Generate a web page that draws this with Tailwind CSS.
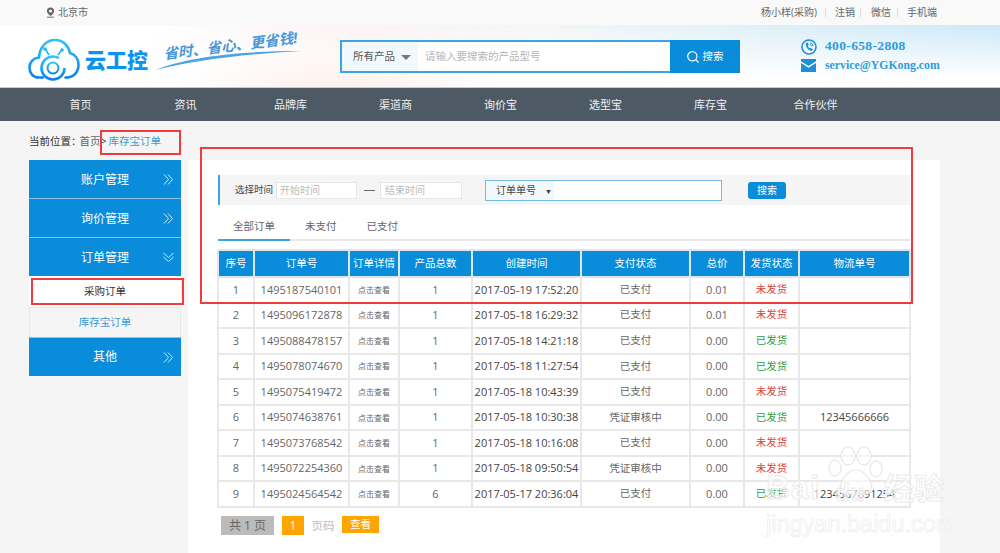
<!DOCTYPE html>
<html lang="zh">
<head>
<meta charset="utf-8">
<script src="https://cdn.jsdelivr.net/npm/@tailwindcss/browser@4"></script>
</head>
<body class="relative w-[1000px] h-[553px] overflow-hidden bg-[#f5f5f5] font-['Open_Sans','Noto_Sans_CJK_SC',sans-serif] text-[10.5px] text-[#555]">

<!-- top bar -->
<div class="h-[25px] bg-[#f9f9f9] flex items-center justify-between pl-[46px] pr-[63px] text-[10px] text-[#666]">
  <div class="flex items-center gap-[3px]">
    <svg width="9" height="11" viewBox="0 0 9 11"><path d="M4.5 0.5a3.6 3.6 0 0 1 3.6 3.6c0 2-2 3.6-3.6 5-1.6-1.4-3.6-3-3.600-5a3.600 3.600 0 0 1 3.600-3.600z" fill="#666"/><circle cx="4.5" cy="4" r="1.6" fill="#f9f9f9"/><rect x="1" y="9.6" width="7" height="1.2" fill="#888"/></svg>
    <span>北京市</span>
  </div>
  <div class="flex items-center">
    <span>杨小样(采购)</span><span class="w-px h-[9px] bg-[#ddd] ml-[8px] mr-[9px]"></span>
    <span>注销</span><span class="w-px h-[9px] bg-[#ddd] ml-[5px] mr-[10px]"></span>
    <span>微信</span><span class="w-px h-[9px] bg-[#ddd] ml-[6px] mr-[9px]"></span>
    <span>手机端</span>
  </div>
</div>

<!-- header -->
<div class="h-[62px] flex items-start bg-[radial-gradient(ellipse_170px_50px_at_340px_70px,#fdeee9,transparent),linear-gradient(180deg,transparent_0%,#ffffff_85%),linear-gradient(90deg,#ffffff_0%,#ffffff_15%,#fbf3f1_35%,#f4f6f7_55%,#e3f1f9_72%,#cde9f8_100%)]">
  <svg class="ml-[28px] mt-[13px] shrink-0" width="52" height="44" viewBox="0 0 52 44">
    <defs><linearGradient id="lg" x1="0" y1="0" x2="0" y2="1"><stop offset="0" stop-color="#2cc4f8"/><stop offset="1" stop-color="#0a82ec"/></linearGradient></defs>
    <path d="M15 39.500H11C5 39.500 1.500 35 1.500 29.500 1.500 24 5.500 20 11 19.500 11.500 9.500 18 2 27 2c8 0 13.500 5.500 15 13 5.500 1.500 8.500 6.500 8.500 12 0 7-5 12.500-12 12.500h-1" fill="none" stroke="url(#lg)" stroke-width="2.600" stroke-linecap="round"/>
    <circle cx="25" cy="30" r="11.500" fill="none" stroke="url(#lg)" stroke-width="2.600" stroke-dasharray="60 12"/>
    <circle cx="25" cy="30" r="5.500" fill="none" stroke="url(#lg)" stroke-width="2"/>
    <path d="M25 23.500v6" stroke="url(#lg)" stroke-width="2"/>
    <circle cx="17" cy="11" r="1.800" fill="#22b4f4"/><circle cx="34" cy="12" r="1.800" fill="#22b4f4"/>
    <path d="M18 12l3 5M33 13l-3 4" stroke="#22b4f4" stroke-width="1.500"/>
  </svg>
  <div class="w-[70px] ml-[5px] mt-[23px] text-[21px] leading-[24px] font-black text-[#0c93ee] shrink-0">云工控</div>
  <div class="relative w-[185px] h-[62px] shrink-0">
    <div class="absolute left-[8px] top-[10px] -rotate-[7deg] italic font-bold text-[14.500px] text-[#4a97d8] whitespace-nowrap">省时、省心、更省钱!</div>
    <svg class="absolute left-[0px] top-[24px]" width="150" height="22" viewBox="0 0 150 22"><path d="M0 21C30 9 80 2 146 2 90 5 40 11 0 21z" fill="#4aa5e2"/></svg>
  </div>
  <div class="mt-[15px] flex h-[33px] w-[400px] shrink-0">
    <div class="flex-1 flex border-2 border-[#3aa5e2] border-r-0 bg-white">
      <div class="w-[76px] bg-[#f2f9fe] flex items-center pl-[11px] pt-[1px] text-[10.500px] text-[#555]">所有产品<span class="ml-[6px] w-0 h-0 border-x-[5px] border-x-transparent border-t-[5px] border-t-[#777]"></span></div>
      <div class="flex items-center pl-[7px] pt-[1px] text-[10.500px] text-[#b5b5b5]">请输入要搜索的产品型号</div>
    </div>
    <div class="w-[70px] bg-[#098cd9] flex items-center justify-center gap-[4px] pt-[1px] text-white text-[10.500px]">
      <svg width="12" height="12" viewBox="0 0 12 12" fill="none" stroke="#fff" stroke-width="1.200"><circle cx="5.300" cy="5.300" r="4.600"/><path d="M8.700 8.700L11.500 11.500"/></svg>
      <span>搜索</span>
    </div>
  </div>
  <div class="ml-[61px] mt-[13px] flex flex-col gap-[2px] font-['Liberation_Serif',serif] font-bold text-[#2d9ce0]">
    <div class="flex items-center h-[17px] gap-[8px] text-[13.500px]">
      <svg width="16" height="16" viewBox="0 0 16 16" fill="none"><circle cx="8" cy="8" r="7" stroke="#1c8fd8" stroke-width="1.600"/><path d="M5 4.200l1.800-.7 1 2.500-1 .8c.3 1 1 2 2 2.600l1-.7 2 1.800-1 1.400c-2.400.3-6.600-3.500-5.800-7.700z" fill="#1c8fd8"/><path d="M9 3.800a3.500 3.500 0 0 1 3 3.400M9 5.500a1.800 1.800 0 0 1 1.500 1.700" stroke="#1c8fd8" stroke-width=".9"/></svg>
      <span class="tracking-[0.35px]">400-658-2808</span>
    </div>
    <div class="flex items-center h-[17px] gap-[8px] text-[11.800px]">
      <svg width="16" height="13" viewBox="0 0 16 13"><path d="M0 0h15v2.200L7.500 7 0 2.200z" fill="#1c8fd8"/><path d="M0 4l7.500 4.800L15 4v9H0z" fill="#1c8fd8"/></svg>
      <span>service@YGKong.com</span>
    </div>
  </div>
</div>

<!-- nav -->
<nav class="h-[34px] border-t border-[#c9c9c9] bg-[#4d5a65] flex pl-[28px] text-[11px] text-[#f0f0f0]">
  <a class="w-[105px] leading-[33px] text-center">首页</a>
  <a class="w-[105px] leading-[33px] text-center">资讯</a>
  <a class="w-[105px] leading-[33px] text-center">品牌库</a>
  <a class="w-[105px] leading-[33px] text-center">渠道商</a>
  <a class="w-[105px] leading-[33px] text-center">询价宝</a>
  <a class="w-[105px] leading-[33px] text-center">选型宝</a>
  <a class="w-[105px] leading-[33px] text-center">库存宝</a>
  <a class="w-[105px] leading-[33px] text-center">合作伙伴</a>
</nav>

<!-- breadcrumb -->
<div class="h-[39px] pl-[29px] pt-[12px] text-[10.500px] leading-[16px] text-[#333]">当前位置<span class="-mr-[2px]">：</span><span class="text-[#666]">首页</span><span class="mr-[2px]">&gt;</span><span class="text-[#3d9ad6]">库存宝订单</span></div>

<!-- main -->
<div class="flex pl-[29px] items-start">
  <aside class="w-[152px] shrink-0 text-white text-[12px]">
    <div class="h-[39px] border-b border-[#8cc4e8] bg-[#098cd9] flex items-center justify-between pl-[52px] pr-[7px]">
      <span class="pt-[2px]">账户管理</span>
      <svg width="11" height="11" viewBox="0 0 11 11" fill="none" stroke="#cfe9f8"><path d="M1 .5l4.500 5-4.500 5M5 .5l4.500 5-4.500 5"/></svg>
    </div>
    <div class="h-[39px] border-b border-[#8cc4e8] bg-[#098cd9] flex items-center justify-between pl-[52px] pr-[7px]">
      <span class="pt-[2px]">询价管理</span>
      <svg width="11" height="11" viewBox="0 0 11 11" fill="none" stroke="#cfe9f8"><path d="M1 .5l4.500 5-4.500 5M5 .5l4.500 5-4.500 5"/></svg>
    </div>
    <div class="h-[38px] bg-[#098cd9] flex items-center justify-between pl-[52px] pr-[7px]">
      <span class="pt-[2px]">订单管理</span>
      <svg width="11" height="11" viewBox="0 0 11 11" fill="none" stroke="#cfe9f8"><path d="M.5 1l5 4.500 5-4.500M.5 5l5 4.500 5-4.500"/></svg>
    </div>
    <div class="h-[31px] bg-white flex items-center justify-center text-[10.500px] text-[#333]">采购订单</div>
    <div class="h-[30px] bg-[#f5f5f5] border-x border-t border-[#e6e6e6] flex items-center justify-center text-[10.500px] text-[#3d9ad6]">库存宝订单</div>
    <div class="h-[39px] border-t border-[#8cc4e8] bg-[#098cd9] flex items-center justify-between pl-[64px] pr-[7px]">
      <span>其他</span>
      <svg width="11" height="11" viewBox="0 0 11 11" fill="none" stroke="#cfe9f8"><path d="M1 .5l4.500 5-4.500 5M5 .5l4.500 5-4.500 5"/></svg>
    </div>
  </aside>

  <main class="ml-[7px] w-[752px] h-[393px] bg-white pt-[15px] pl-[30px] pr-[30px]">
    <!-- filter -->
    <div class="h-[30px] w-[692px] bg-[#f5f5f5] border-l-2 border-[#3aa5e2] flex items-center text-[10px]">
      <span class="ml-[15px] w-[41px] whitespace-nowrap text-[9.500px] text-[#444]">选择时间</span>
      <div class="w-[81px] h-[17px] bg-white border border-[#e6e6e6] pl-[3px] leading-[15px] text-[#bbb]">开始时间</div>
      <span class="mx-[7px] w-[11px] h-px bg-[#666]"></span>
      <div class="ml-[-2px] w-[82px] h-[17px] bg-white border border-[#e6e6e6] pl-[4px] leading-[15px] text-[#bbb]">结束时间</div>
      <div class="ml-[23px] w-[237px] h-[21px] bg-white border border-[#76bae6]">
        <div class="w-[68px] h-full bg-[#f2f9fe] pl-[10px] leading-[18px] text-[#444]">订单单号<span class="ml-[10px] text-[5px] align-middle">▼</span></div>
      </div>
      <div class="ml-[26px] w-[38px] h-[17px] rounded-[3px] bg-[#098cd9] text-white text-center leading-[17px]">搜索</div>
    </div>
    <!-- tabs -->
    <div class="h-[36px] w-[692px] border-b-2 border-[#e8e8e8] flex text-[10.500px] text-[#666]">
      <div class="w-[72px] h-[36px] border-b-2 border-[#3aa5e2] text-center leading-[43px]">全部订单</div>
      <div class="ml-[15px] leading-[43px]">未支付</div>
      <div class="ml-[30px] leading-[43px]">已支付</div>
    </div>
    <!-- table -->
    <table class="mt-[8px] -ml-[1px] w-[692px] table-fixed border-collapse text-center [&_td]:border-2 [&_td]:border-[#e8e8e8] [&_td]:p-0 [&_td]:h-[25.550px] [&_td]:text-[11px] [&_th]:border-2 [&_th]:border-[#dfe6ea] [&_th]:p-0 [&_th]:h-[27px] [&_th]:font-normal [&_th]:bg-[#098cd9] [&_th]:text-white [&_td]:text-[#666] whitespace-nowrap">
      <colgroup>
        <col class="w-[36px]"><col class="w-[95px]"><col class="w-[50px]"><col class="w-[73px]"><col class="w-[109px]"><col class="w-[109px]"><col class="w-[54px]"><col class="w-[55px]"><col class="w-[111px]">
      </colgroup>
      <thead><tr><th>序号</th><th>订单号</th><th>订单详情</th><th>产品总数</th><th>创建时间</th><th>支付状态</th><th>总价</th><th>发货状态</th><th>物流单号</th></tr></thead>
      <tbody>
        <tr><td>1</td><td>1495187540101</td><td class="!text-[8px]">点击查看</td><td>1</td><td class="!text-[#444]">2017-05-19 17:52:20</td><td class="!text-[10.500px]">已支付</td><td>0.01</td><td class="!text-[#d9413f] !text-[10.500px]">未发货</td><td></td></tr>
        <tr><td>2</td><td>1495096172878</td><td class="!text-[8px]">点击查看</td><td>1</td><td class="!text-[#444]">2017-05-18 16:29:32</td><td class="!text-[10.500px]">已支付</td><td>0.01</td><td class="!text-[#d9413f] !text-[10.500px]">未发货</td><td></td></tr>
        <tr><td>3</td><td>1495088478157</td><td class="!text-[8px]">点击查看</td><td>1</td><td class="!text-[#444]">2017-05-18 14:21:18</td><td class="!text-[10.500px]">已支付</td><td>0.00</td><td class="!text-[#2f9e3f] !text-[10.500px]">已发货</td><td></td></tr>
        <tr><td>4</td><td>1495078074670</td><td class="!text-[8px]">点击查看</td><td>1</td><td class="!text-[#444]">2017-05-18 11:27:54</td><td class="!text-[10.500px]">已支付</td><td>0.00</td><td class="!text-[#2f9e3f] !text-[10.500px]">已发货</td><td></td></tr>
        <tr><td>5</td><td>1495075419472</td><td class="!text-[8px]">点击查看</td><td>1</td><td class="!text-[#444]">2017-05-18 10:43:39</td><td class="!text-[10.500px]">已支付</td><td>0.00</td><td class="!text-[#d9413f] !text-[10.500px]">未发货</td><td></td></tr>
        <tr><td>6</td><td>1495074638761</td><td class="!text-[8px]">点击查看</td><td>1</td><td class="!text-[#444]">2017-05-18 10:30:38</td><td class="!text-[10.500px]">凭证审核中</td><td>0.00</td><td class="!text-[#2f9e3f] !text-[10.500px]">已发货</td><td class="!text-[#444]">12345666666</td></tr>
        <tr><td>7</td><td>1495073768542</td><td class="!text-[8px]">点击查看</td><td>1</td><td class="!text-[#444]">2017-05-18 10:16:08</td><td class="!text-[10.500px]">已支付</td><td>0.00</td><td class="!text-[#d9413f] !text-[10.500px]">未发货</td><td></td></tr>
        <tr><td>8</td><td>1495072254360</td><td class="!text-[8px]">点击查看</td><td>1</td><td class="!text-[#444]">2017-05-18 09:50:54</td><td class="!text-[10.500px]">凭证审核中</td><td>0.00</td><td class="!text-[#d9413f] !text-[10.500px]">未发货</td><td></td></tr>
        <tr><td>9</td><td>1495024564542</td><td class="!text-[8px]">点击查看</td><td>6</td><td class="!text-[#444]">2017-05-17 20:36:04</td><td class="!text-[10.500px]">已支付</td><td>0.00</td><td class="!text-[#2f9e3f] !text-[10.500px]">已发货</td><td class="!text-[#444]">1234567891254</td></tr>
      </tbody>
    </table>
    <!-- pagination -->
    <div class="mt-[8px] ml-[3px] flex items-start text-[12px]">
      <div class="w-[53px] h-[19px] bg-[#bbbbbb] text-[#666] text-center leading-[19px]">共 1 页</div>
      <div class="ml-[8px] w-[22px] h-[19px] bg-[#ffa500] text-white text-center leading-[19px]">1</div>
      <div class="ml-[7px] w-[24px] h-[19px] text-[#bbb] text-center leading-[19px] text-[11.500px]">页码</div>
      <div class="ml-[7px] w-[37px] h-[17px] bg-[#ffa500] text-white text-center leading-[17px] text-[10.500px]">查看</div>
    </div>
  </main>
</div>

<!-- red annotation frames -->
<div class="absolute left-[100px] top-[130px] w-[81px] h-[25px] border-2 border-[#f03c3c]"></div>
<div class="absolute left-[200px] top-[147px] w-[713px] h-[157px] border-2 border-[#f03c3c]"></div>
<div class="absolute left-[31px] top-[278px] w-[153px] h-[27px] border-2 border-[#f03c3c]"></div>

<!-- watermark -->
<div class="absolute left-[768px] top-[446px] w-[180px] h-[100px]">
  <svg class="absolute left-[58px] top-0" width="58" height="50" viewBox="0 0 58 50" fill="#ffffff" fill-opacity=".55" stroke="#e8e8e8" stroke-opacity=".85" stroke-width="1.500">
    <ellipse cx="22" cy="10" rx="7" ry="9"/><ellipse cx="38" cy="10" rx="7" ry="9"/><ellipse cx="9" cy="22" rx="6" ry="8"/><ellipse cx="50" cy="23" rx="6" ry="8"/>
    <path d="M14 44c0-10 8-20 16-20s16 10 16 20c0 5-8 4-16 4s-16 1-16-4z"/>
  </svg>
  <div class="absolute left-[-2px] top-[22px] text-[33px] leading-[40px] font-bold text-white/55 [-webkit-text-stroke:1px_#ebebeb] font-['Liberation_Sans',sans-serif] tracking-[1px]">Bai</div>
  <div class="absolute left-[67px] top-[32px] text-[24px] leading-[30px] font-bold text-white/55 [-webkit-text-stroke:1px_#ebebeb] font-['Liberation_Sans',sans-serif]">du</div>
  <div class="absolute left-[116px] top-[24px] text-[30px] leading-[36px] font-bold text-white/60 [-webkit-text-stroke:1px_#ebebeb] whitespace-nowrap">经验</div>
  <div class="absolute left-[-2px] top-[63px] text-[23.500px] leading-[30px] text-white/55 [-webkit-text-stroke:0.7px_#ededed] font-['Liberation_Sans',sans-serif] whitespace-nowrap">jingyan.baidu.com</div>
</div>

</body>
</html>
